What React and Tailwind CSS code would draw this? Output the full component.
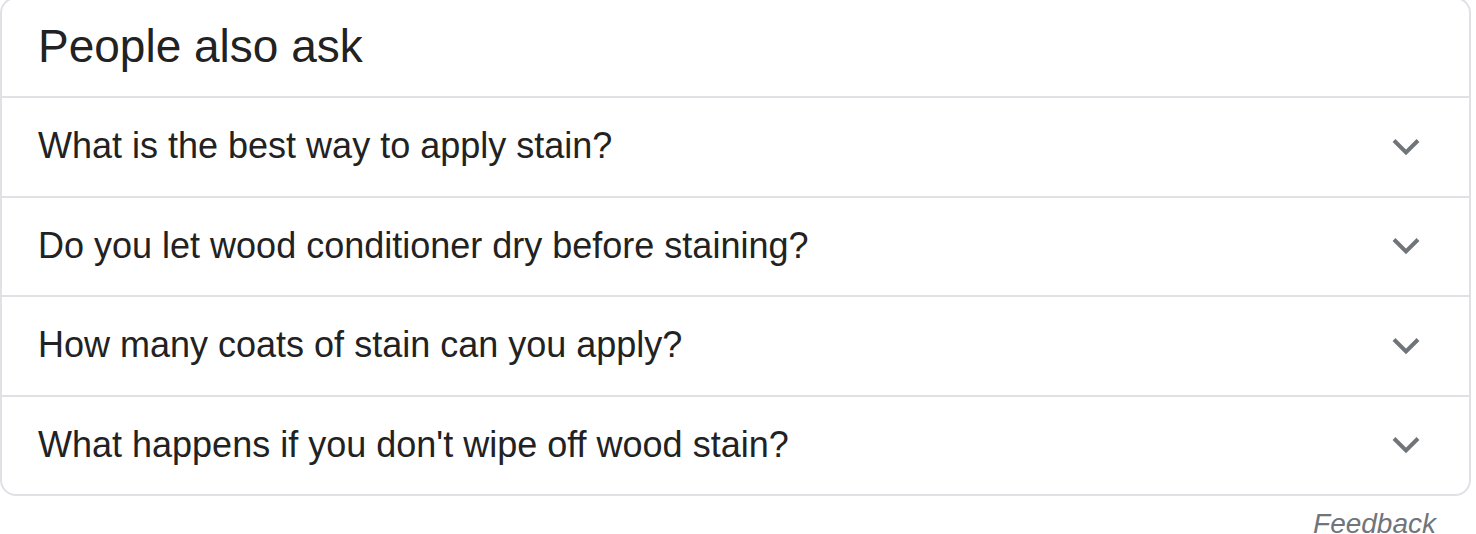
import React from 'react';

const questions = [
  "What is the best way to apply stain?",
  "Do you let wood conditioner dry before staining?",
  "How many coats of stain can you apply?",
  "What happens if you don't wipe off wood stain?",
];

function Chevron() {
  return (
    <svg width="28" height="18" viewBox="0 0 28 18" fill="none" className="text-[#70757a]">
      <polyline points="2,2.5 14,14.5 26,2.5" stroke="currentColor" strokeWidth="4" strokeLinecap="butt" />
    </svg>
  );
}

function App() {
  return (
    <div className="w-[1476px] h-[534px] bg-white overflow-hidden font-['Liberation_Sans',Arial,sans-serif] text-[#222222]">
      <div className="-mt-[3px] w-[1471px] border-2 border-[#dfe1e5] rounded-[16px] bg-white">
        <div className="h-[99px] pt-[20px] pl-[36px] border-b-2 border-[#dfe1e5]">
          <h2 className="text-[46px] leading-[54px]">People also ask</h2>
        </div>
        {questions.map((q, i) => (
          <div
            key={q}
            className={
              i < questions.length - 1
                ? "h-[99.5px] flex items-center justify-between pl-[36px] pr-[49px] border-b-2 border-[#dfe1e5]"
                : "h-[97.5px] flex items-center justify-between pl-[36px] pr-[49px]"
            }
          >
            <span className="text-[36px] leading-[40px] pb-[1px]">{q}</span>
            <Chevron />
          </div>
        ))}
      </div>
      <div className="flex justify-end pr-[40px] mt-[12px]">
        <span className="italic text-[28px] leading-[32px] text-[#70757a]">Feedback</span>
      </div>
    </div>
  );
}

export default App;
